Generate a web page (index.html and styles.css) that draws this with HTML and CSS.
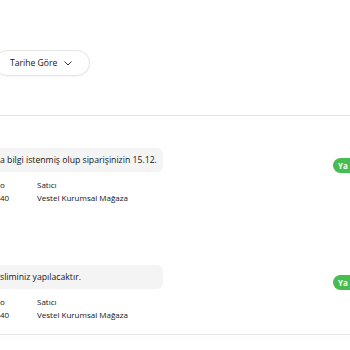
FILE: index.html
```html
<!DOCTYPE html>
<html lang="tr">
<head>
 <meta charset="UTF-8">
 <meta name="viewport" content="width=device-width, initial-scale=1.0">
 <title>Siparişlerim</title>
 <link rel="stylesheet" href="styles.css">
</head>
<body>
 <div class="page">
  <div class="filter-bar">
   <button class="sort-button">Tarihe Göre
    <svg class="chevron" width="8" height="5" viewBox="0 0 8 5"><path d="M0.5 0.5 L4 4 L7.5 0.5" fill="none" stroke="#333" stroke-width="1"/></svg>
   </button>
  </div>
  <div class="divider"></div>

  <div class="order">
   <div class="message-row">
    <div class="bubble">a bilgi istenmiş olup siparişinizin 15.12.</div>
    <span class="badge">Ya</span>
   </div>
   <div class="meta">
    <div class="meta-col first">
     <span class="meta-label">o</span>
     <span class="meta-value">40</span>
    </div>
    <div class="meta-col">
     <span class="meta-label">Satıcı</span>
     <span class="meta-value">Vestel Kurumsal Mağaza</span>
    </div>
   </div>
  </div>

  <div class="order second">
   <div class="message-row">
    <div class="bubble">sliminiz yapılacaktır.</div>
    <span class="badge">Ya</span>
   </div>
   <div class="meta">
    <div class="meta-col first">
     <span class="meta-label">o</span>
     <span class="meta-value">40</span>
    </div>
    <div class="meta-col">
     <span class="meta-label">Satıcı</span>
     <span class="meta-value">Vestel Kurumsal Mağaza</span>
    </div>
   </div>
  </div>
  <div class="bottom-line"></div>
 </div>
</body>
</html>
```

FILE: styles.css
```css
body {
 margin: 0;
 background: #ffffff;
 font-family: "Open Sans", "Noto Sans", sans-serif;
 color: #141414;
 overflow: hidden;
}

.page {
 width: 350px;
 height: 350px;
 overflow: hidden;
}

.filter-bar {
 padding-top: 50px;
 height: 26px;
}

.sort-button {
 display: flex;
 align-items: center;
 gap: 7px;
 height: 26px;
 width: 96px;
 margin-left: -6px;
 padding: 0 0 0 15px;
 border: 1px solid #e4e4e4;
 border-radius: 13px;
 background: #ffffff;
 font-family: inherit;
 font-size: 8.6px;
 color: #141414;
 box-shadow: 0 1px 2px rgba(0, 0, 0, 0.04);
}

.chevron {
 display: block;
}

.divider {
 margin-top: 39px;
 height: 1px;
 background: #e2e2e2;
}

.order {
 padding-top: 32px;
}

.order.second {
 padding-top: 62px;
}

.message-row {
 display: flex;
 align-items: flex-start;
 justify-content: space-between;
 height: 26px;
}

.bubble {
 width: 163px;
 height: 24px;
 line-height: 24px;
 font-size: 8.7px;
 background: #f4f4f4;
 border-radius: 0 6px 6px 0;
 white-space: nowrap;
}

.badge {
 margin-top: 10px;
 margin-right: -10px;
 width: 27px;
 height: 15px;
 line-height: 15px;
 padding-left: 5px;
 box-sizing: border-box;
 background: #45bd4f;
 color: #ffffff;
 font-size: 8px;
 font-weight: 700;
 border-radius: 8px;
}

.meta {
 display: flex;
 margin-top: 5px;
 font-size: 8px;
 line-height: 11px;
}

.meta-col {
 display: flex;
 flex-direction: column;
 gap: 2px;
}

.meta-col.first {
 width: 37px;
}

.bottom-line {
 margin-top: 14px;
 height: 1px;
 background: #e6e6e6;
 box-shadow: 0 2px 4px rgba(0, 0, 0, 0.06);
}
```
